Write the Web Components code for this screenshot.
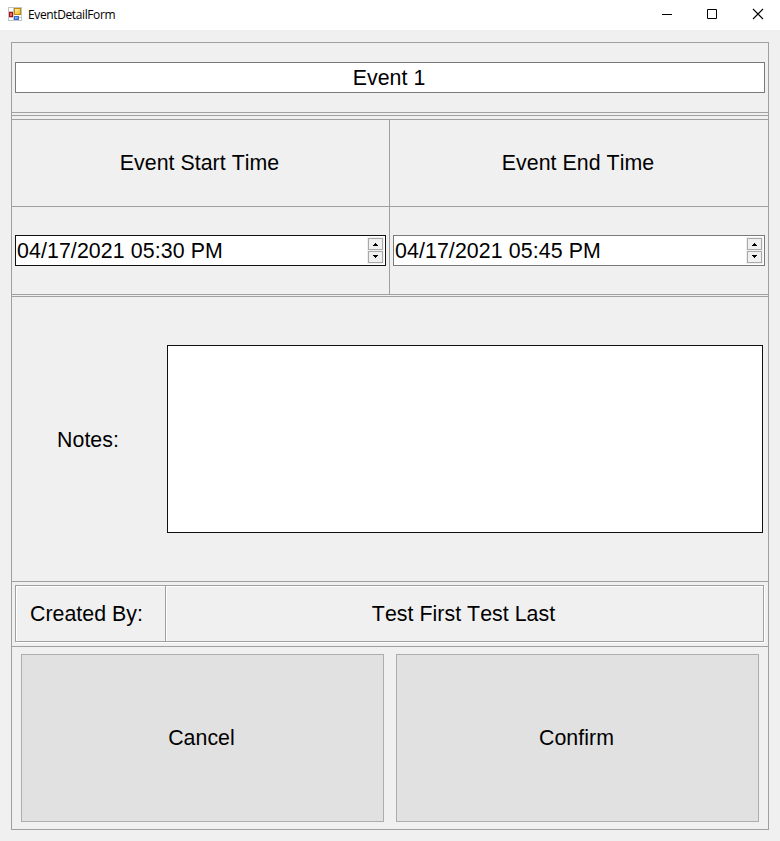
<!DOCTYPE html>
<html lang="en">
<head>
<meta charset="utf-8">
<title>EventDetailForm</title>
<style>
html,body{margin:0;height:100%;background:#f0f0f0;overflow:hidden}
body{font:21.33px/24px "Liberation Sans",Arial,sans-serif;font-kerning:none;letter-spacing:.04px;color:#000;--line:#a0a0a0}
</style>
</head>
<body>
<event-detail-form></event-detail-form>
<script>
function define(name, markup) {
  const template = document.createElement('template');
  template.innerHTML = markup;
  customElements.define(name, class extends HTMLElement {
    constructor() {
      super();
      this.attachShadow({mode: 'open'}).append(template.content.cloneNode(true));
    }
  });
}

define('window-bar', `
<style>
:host{display:flex;align-items:center;height:30px;background:#fff;box-sizing:border-box;padding-left:8px;font:12px/16px "Open Sans","Noto Sans",sans-serif}
.title{margin-left:6px;flex:1;letter-spacing:-.38px;white-space:nowrap}
.ctl{width:45px;height:30px;display:flex}
svg{display:block}
.app{margin-top:-2px}
</style>
<svg class="app" width="14" height="14" shape-rendering="crispEdges">
<defs>
<linearGradient id="y" x2="1" y2="1"><stop stop-color="#fff3b0"/><stop offset="1" stop-color="#f0b818"/></linearGradient>
<linearGradient id="b" x2="1" y2="1"><stop stop-color="#a8ccff"/><stop offset="1" stop-color="#3a70dc"/></linearGradient>
</defs>
<rect width="14" height="14" fill="#c3c3c3"/><rect x="1" y="1" width="12" height="12" fill="#fff"/>
<path d="M5 0h1v14H5zM0 4h6v1H0zM0 10h14v1H0z" fill="#c8c8c8"/>
<rect x="6" y="1" width="7" height="7" fill="#c08a10"/><rect x="7" y="2" width="5" height="5" fill="url(#y)"/>
<rect x="1" y="5" width="4" height="5" fill="#a51410"/><rect x="2" y="6" width="2" height="3" fill="#e8685a"/>
<rect x="6" y="9" width="5" height="4" fill="#3c6dce"/><rect x="7" y="10" width="3" height="2" fill="url(#b)"/>
</svg>
<span class="title"><slot></slot></span>
<span class="ctl"><svg width="45" height="30"><path d="M17 14.5h10" stroke="#000"/></svg></span>
<span class="ctl"><svg width="45" height="30"><path d="M17.5 9.5h9v9h-9z" fill="none" stroke="#000"/></svg></span>
<span class="ctl"><svg width="45" height="30"><path d="M18 9l10 10M28 9l-10 10" fill="none" stroke="#000" stroke-width="1.1"/></svg></span>
`);

define('form-row', `
<style>
:host{display:flex;box-sizing:border-box;border-bottom:1px solid var(--line);align-items:center}
:host(:last-child){border-bottom:0}
</style><slot></slot>`);

define('form-cell', `
<style>
:host{display:flex;flex:1;box-sizing:border-box;align-items:center;justify-content:center;align-self:stretch}
:host([divided]){flex:0 0 378px;border-right:1px solid var(--line)}
</style><slot></slot>`);

define('text-field', `
<style>
:host{display:flex;box-sizing:border-box;height:31px;flex:1;background:#fff;border:1px solid #7a7a7a;align-items:center;justify-content:center}
:host([dark]){border-color:#111}
</style><slot></slot>`);

define('date-picker', `
<style>
:host{display:flex;flex:1;box-sizing:border-box;height:31px;background:#fff;border:1px solid #7a7a7a;align-items:center;padding-left:1px}
:host([focused]){border-color:#111}
.value{flex:1;white-space:nowrap;letter-spacing:.1px}
.spin{width:17px;height:27px;box-sizing:border-box;background:#f0f0f0;padding:1px;margin-right:1px;display:flex;flex-direction:column;gap:1px}
svg{display:block}
</style>
<span class="value"><slot></slot></span>
<span class="spin">
<svg width="15" height="12" shape-rendering="crispEdges"><path d="M.5.5h14v11H.5z" fill="#f0f0f0" stroke="#a9a9a9"/><path d="M7 5h1v1h1v1h1v1H5V7h1V6h1z"/></svg>
<svg width="15" height="12" shape-rendering="crispEdges"><path d="M.5.5h14v11H.5z" fill="#f0f0f0" stroke="#a9a9a9"/><path d="M5 4h5v1H9v1H8v1H7V6H6V5H5z"/></svg>
</span>`);

define('creator-panel', `
<style>
:host{display:flex;width:749px;height:57px;margin-bottom:1px;box-sizing:border-box;border:1px solid var(--line);box-shadow:inset 1px 1px #fff,1px 1px #fff}
.label,.name{display:flex;align-items:center;justify-content:center}
.label{width:149px;padding-right:8px;box-sizing:border-box}
.name{flex:1;border-left:1px solid var(--line);box-shadow:inset 1px 1px #fff;padding-right:2px}
</style>
<span class="label"><slot name="label"></slot></span><span class="name"><slot></slot></span>`);

define('push-button', `
<style>
:host{display:flex;width:363px;height:168px;box-sizing:border-box;background:#e1e1e1;border:1px solid #adadad;align-items:center;justify-content:center;padding-right:2px}
</style><slot></slot>`);

define('event-detail-form', `
<style>
:host{display:block}
.frame{box-sizing:border-box;width:758px;height:788px;margin:12px 0 0 11px;border:1px solid var(--line);display:grid;grid-template-rows:70px 3px 4px 87px 88px 2px 285px 65px 182px}
.pad{padding:0 3px}
.head form-cell{padding-right:2px}
.notes{padding-left:3px}
.notes span{width:152px;box-sizing:border-box;padding:2px 6px 0 0;text-align:center}
.notes text-field{height:188px;flex:none;width:596px}
.title{padding-right:2px}
.actions{gap:12px;padding-left:9px}
</style>
<window-bar>EventDetailForm</window-bar>
<div class="frame">
<form-row class="pad"><text-field><span class="title">Event 1</span></text-field></form-row>
<form-row></form-row><form-row></form-row>
<form-row class="head"><form-cell divided>Event Start Time</form-cell><form-cell>Event End Time</form-cell></form-row>
<form-row><form-cell divided class="pad"><date-picker focused>04/17/2021 05:30 PM</date-picker></form-cell><form-cell class="pad"><date-picker>04/17/2021 05:45 PM</date-picker></form-cell></form-row>
<form-row></form-row>
<form-row class="notes"><span>Notes:</span><text-field dark></text-field></form-row>
<form-row class="pad"><creator-panel><span slot="label">Created By:</span>Test First Test Last</creator-panel></form-row>
<form-row class="actions"><push-button>Cancel</push-button><push-button>Confirm</push-button></form-row>
</div>`);
</script>
</body>
</html>
